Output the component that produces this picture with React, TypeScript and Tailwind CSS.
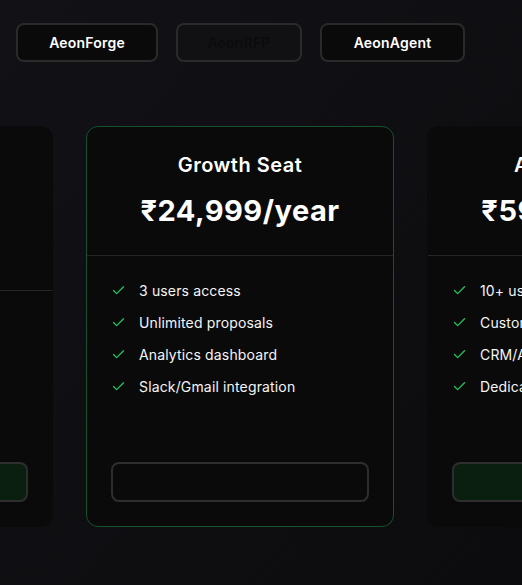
import React from "react";
import { Check } from "lucide-react";

const font = { fontFamily: "Inter, 'Noto Sans', 'DejaVu Sans', sans-serif" };

function Feature({ text }: { text: string }) {
  return (
    <li className="flex items-center gap-[13px] h-5">
      <Check className="w-[15px] h-[15px] text-[#22c55e] shrink-0" strokeWidth={2} />
      <span className="text-[14px] tracking-[0.15px] text-[#f5f5f5] whitespace-nowrap">{text}</span>
    </li>
  );
}

function Card({
  title,
  price,
  features,
  highlight,
  green,
  tall,
}: {
  title: string;
  price: string;
  features: string[];
  highlight?: boolean;
  green?: boolean;
  tall?: boolean;
}) {
  return (
    <div
      className={`w-[308px] h-[401px] shrink-0 rounded-xl bg-[#0a0a0a] flex flex-col border ${
        highlight ? "border-[#14532d]" : "border-[#0a0a0a]"
      }`}
    >
      <div
        className={`flex flex-col items-center border-b border-[#262626] ${
          tall ? "h-[164px] pt-6" : "h-[129px] pt-6"
        }`}
      >
        <div className="text-[20px] leading-7 tracking-[0.5px] font-semibold text-white whitespace-nowrap">
          {title}
        </div>
        <div className="mt-[14px] text-[29px] leading-9 tracking-[0.5px] font-bold text-white whitespace-nowrap">
          {price}
        </div>
      </div>
      <ul className="flex flex-col gap-3 px-6 pt-6">
        {features.map((f) => (
          <Feature key={f} text={f} />
        ))}
      </ul>
      <div className="mt-auto px-6 pb-6">
        <div
          className={`h-[40px] w-full rounded-lg border-2 border-[#2e2e2e] ${
            green ? "bg-[#0b1f10]" : "bg-[#0a0a0a]"
          }`}
        />
      </div>
    </div>
  );
}

export default function App() {
  return (
    <div
      className="w-[522px] h-[585px] overflow-hidden bg-gradient-to-br from-[#121116] to-[#0c0c0e]"
      style={font}
    >
      <div className="flex gap-[18px] pl-4 pt-[23px]">
        <div className="w-[142px] h-[39px] rounded-lg border-2 border-[#2a2a2a] bg-[#0a0a0a] flex items-center justify-center text-[14px] tracking-[0.2px] font-semibold text-white">
          AeonForge
        </div>
        <div className="w-[126px] h-[39px] rounded-lg border-2 border-[#2a2a2a] bg-[#111113] flex items-center justify-center text-[14px] tracking-[0.2px] font-semibold text-[#0b0b0c]">
          AeonRFP
        </div>
        <div className="w-[145px] h-[39px] rounded-lg border-2 border-[#2a2a2a] bg-[#0a0a0a] flex items-center justify-center text-[14px] tracking-[0.2px] font-semibold text-white">
          AeonAgent
        </div>
      </div>
      <div className="flex gap-[33px] ml-[-255px] mt-[64px]">
        <Card
          title="Starter Seat"
          price="₹9,999/year"
          features={["1 user access", "10 proposals/month", "Basic templates", "Email support"]}
          green
          tall
        />
        <Card
          title="Growth Seat"
          price="₹24,999/year"
          features={["3 users access", "Unlimited proposals", "Analytics dashboard", "Slack/Gmail integration"]}
          highlight
        />
        <Card
          title="Agency Suite"
          price="₹59,999/year"
          features={["10+ users access", "Custom workflows", "CRM/API integration", "Dedicated support"]}
          green
        />
      </div>
    </div>
  );
}
